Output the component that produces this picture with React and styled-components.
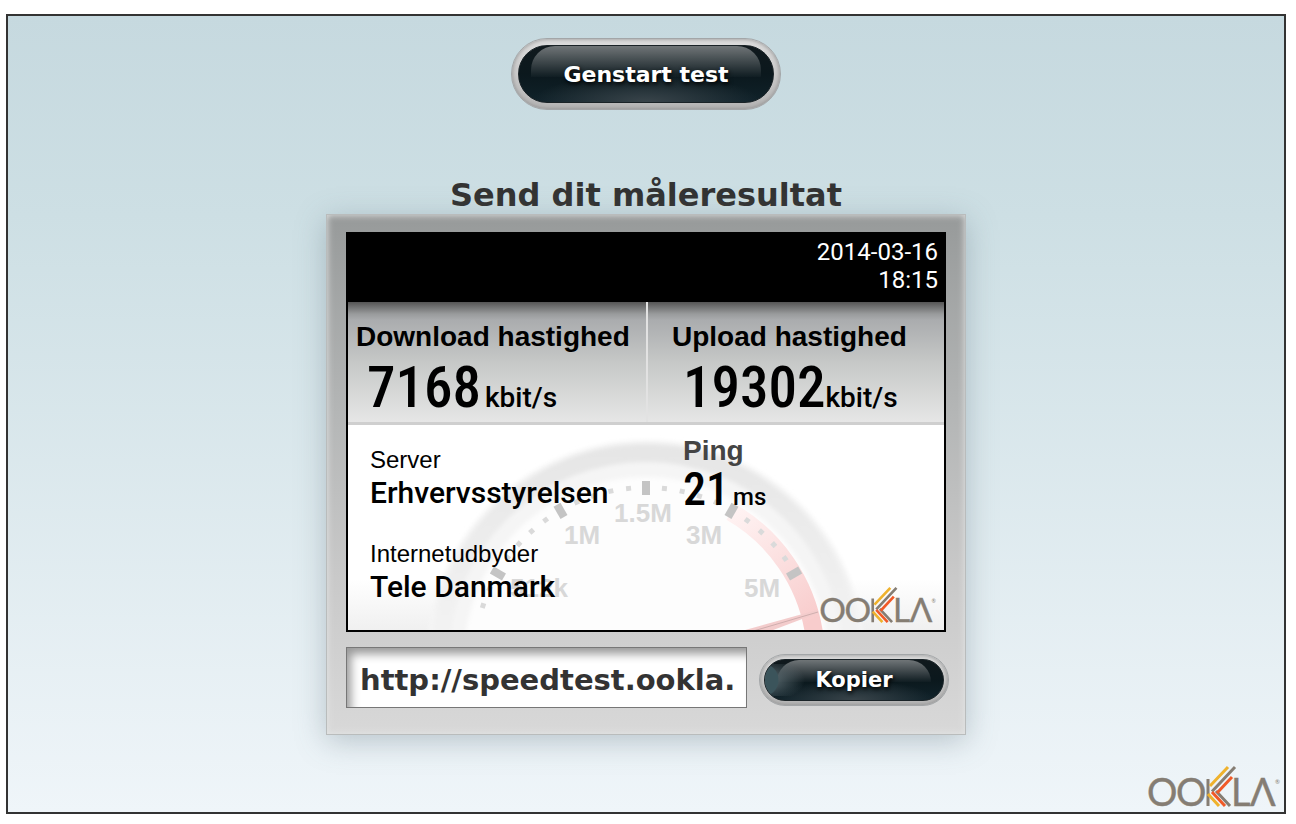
import React from "react";
import styled, { createGlobalStyle } from "styled-components";

const GlobalStyle = createGlobalStyle`
  * {
    box-sizing: border-box;
  }

  body {
    margin: 0;
    background: #fff;
    color: #333;
    font-family: "DejaVu Sans", Verdana, sans-serif;
  }
`;

const Page = styled.div`
  min-height: 100vh;
  padding: 14px 10px 10px 6px;
  display: flex;
`;

const Frame = styled.main`
  flex: 1;
  display: flex;
  flex-direction: column;
  align-items: center;
  padding: 22px 4px 4px;
  border: 2px solid #333;
  background: linear-gradient(#c6d9df, #cddfe4 25%, #eff5f9);
`;

const GlossButton = styled.button`
  flex: none;
  width: ${(p) => (p.$small ? "190px" : "270px")};
  height: ${(p) => (p.$small ? "52px" : "72px")};
  margin-top: ${(p) => (p.$small ? "4px" : "0")};
  padding: ${(p) => (p.$small ? "4px" : "6px")};
  border: 1px solid #a3a6a8;
  border-radius: 36px;
  background: linear-gradient(#dedede, #b5b5b5);
  box-shadow: inset 0 0 4px #8b8b8b;
  color: #fff;
  font-family: inherit;
  font-size: ${(p) => (p.$small ? "21px" : "22px")};
  font-weight: bold;
  cursor: pointer;
`;

const ButtonFace = styled.span`
  position: relative;
  display: flex;
  align-items: center;
  justify-content: center;
  height: 100%;
  overflow: hidden;
  border: 1px solid #1a2327;
  border-radius: 30px;
  text-shadow: 1px 2px 4px #000;
  background: radial-gradient(ellipse 45% 50% at 50% 100%, #39444a, transparent),
    linear-gradient(#10191d, #0b181d 50%, #10222a);

  &::before {
    content: "";
    position: absolute;
    top: 0;
    left: 12px;
    right: 12px;
    height: 55%;
    border-radius: 24px 24px 0 0;
    background: linear-gradient(rgba(255, 255, 255, 0.4), rgba(255, 255, 255, 0.02));
  }
`;

const Bubble = styled.span`
  position: absolute;
  top: 4px;
  bottom: 4px;
  left: 0;
  width: 44px;
  background: radial-gradient(ellipse 14px 16px at 0 50%, #3b545b 92%, transparent),
    radial-gradient(ellipse 40px 22px at 0 50%, #627278, transparent);
`;

const ButtonText = styled.span`
  position: relative;
`;

const Title = styled.h1`
  margin: 66px 0 0;
  font-size: 32px;
  line-height: 38px;
  font-weight: bold;
`;

const Card = styled.section`
  width: 640px;
  max-width: 100%;
  padding: 17px 19px 26px;
  border: 1px solid #b9bcbc;
  background: linear-gradient(#979a9a, #b4b6b6 38%, #c9c9c9 70%, #d8d8d8);
  box-shadow: 0 6px 28px rgba(90, 110, 120, 0.35), inset 0 0 7px #e4e6e6;
`;

const Result = styled.div`
  border: 2px solid #000;
  background: #fff;
  color: #000;
`;

const Timestamp = styled.div`
  height: 68px;
  padding: 4px 6px;
  background: #000;
  color: #fff;
  font: 24px/28px Roboto, sans-serif;
  text-align: right;
`;

const Speeds = styled.div`
  display: grid;
  grid-template-columns: 1fr 1fr;
  height: 123px;
  border-bottom: 3px solid #cfcfcf;
  background: linear-gradient(#555 0, #999b9c 12px, #aaacae 18px, #c6c8c7 60px, #e6e6e6);
`;

const Speed = styled.div`
  height: 120px;
  padding: 19px 0 0 ${(p) => (p.$divided ? "24px" : "8px")};
  border-left: ${(p) => (p.$divided ? "2px solid #e2e2e2" : "none")};
`;

const Label = styled.div`
  color: ${(p) => p.$color || "#000"};
  font: bold 28px/32px "Liberation Sans", Arial, sans-serif;
`;

const Reading = styled.div`
  display: flex;
  align-items: baseline;
  gap: ${(p) => p.$gap || "4px"};
  padding-left: ${(p) => p.$indent || "0"};
  font-family: "Roboto Condensed", "Liberation Sans Narrow", sans-serif;
  font-weight: 500;
  font-size: ${(p) => (p.$small ? "46px" : "57px")};
  line-height: ${(p) => (p.$small ? "44px" : "70px")};
`;

const Unit = styled.span`
  font-family: Roboto, sans-serif;
  font-size: ${(p) => (p.$small ? "24px" : "28px")};
  font-weight: 500;
`;

const Details = styled.div`
  display: grid;
  height: 205px;
  background: linear-gradient(#fff 75%, #f0f0f0);

  > * {
    grid-area: 1 / 1;
  }
`;

const Gauge = styled.svg`
  width: 100%;
  height: 100%;
  font: bold 26px "Liberation Sans", Arial, sans-serif;
`;

const Facts = styled.div`
  display: grid;
  grid-template-columns: 313px 1fr;
  padding: 10px 0 0 22px;
`;

const Fact = styled.div`
  padding-top: ${(p) => p.$top};
`;

const FactName = styled.div`
  font: 24px/30px "Liberation Sans", Arial, sans-serif;
`;

const FactValue = styled.div`
  font: 500 30px/36px Roboto, sans-serif;
`;

const Logo = styled.svg`
  display: block;
  width: ${(p) => p.$width};
  overflow: visible;
  font-family: Lato, sans-serif;
`;

const CornerLogo = styled.div`
  align-self: end;
  justify-self: end;
  padding: 0 8px 6px 0;
`;

const PageLogo = styled.div`
  margin-top: auto;
  align-self: flex-end;
`;

const ShareRow = styled.div`
  display: flex;
  align-items: center;
  gap: 12px;
  margin: 15px -3px 0 0;
`;

const ShareInput = styled.input`
  flex: 1;
  min-width: 0;
  height: 61px;
  padding: 4px 13px 0;
  border: 1px solid #777;
  border-radius: 0;
  background: #fff;
  box-shadow: inset 6px 8px 10px -2px #999;
  color: #333;
  font: bold 29px "DejaVu Sans", Verdana, sans-serif;
`;

const Ookla = ({ width }) => (
  <Logo $width={width} viewBox="0 0 132 42" role="img" aria-label="Ookla">
    <g fill="#857d73" stroke="#857d73" strokeWidth="0.4" fontSize="38">
      <text x="-1 28" y="40">OO</text>
      <text x="83" y="40">L</text>
      <text x="102" y="40">Λ</text>
      <text x="127" y="18" fontSize="6" stroke="none">®</text>
    </g>
    <g fill="none" strokeWidth="3">
      <path stroke="#857d73" d="M60 13V40M64 25.500L87 1M68 25L82 40" />
      <path stroke="#efb22d" d="M62 20L80 1M60 28L71 40" />
      <path stroke="#f05a28" d="M69 27L84 11M64 26L77 40" />
    </g>
  </Logo>
);

const MARKS = [-72, -66, -60, -54, -48, -42, -36, -30, -24, -18, -12, -6, 0, 6, 12, 18, 24, 30, 36, 42, 48, 54, 60];

const SpeedGauge = () => (
  <Gauge viewBox="0 0 596 206" preserveAspectRatio="xMidYMax slice" aria-hidden="true">
    <defs>
      <linearGradient id="fade" x1="0" y1="0" x2="0" y2="1">
        <stop offset="0" stopColor="#e6e6e6" />
        <stop offset="0.4" stopColor="#f2f2f2" />
      </linearGradient>
      <linearGradient id="red" gradientUnits="userSpaceOnUse" x1="380" y1="90" x2="460" y2="200">
        <stop offset="0" stopColor="#fff3f3" />
        <stop offset="1" stopColor="#f8cccc" />
      </linearGradient>
      <filter id="soft">
        <feGaussianBlur stdDeviation="2" />
      </filter>
    </defs>
    <circle cx="298" cy="235" r="219" fill="#f5f5f5" filter="url(#soft)" />
    <circle cx="298" cy="235" r="206" fill="none" stroke="url(#fade)" strokeWidth="18" filter="url(#soft)" />
    <circle cx="298" cy="235" r="182" fill="#fdfdfd" filter="url(#soft)" />
    <path d="M383 88A170 170 0 0 1 466 209" fill="none" stroke="url(#red)" strokeWidth="18" />
    {MARKS.map((angle) =>
      angle % 30 === 0 ? (
        <rect key={angle} x="294" y="57" width="8" height="14" fill="#c4c4c4" transform={`rotate(${angle} 298 235)`} />
      ) : (
        <rect key={angle} x="296" y="61" width="5" height="5" fill="#dadada" transform={`rotate(${angle} 298 235)`} />
      )
    )}
    <g fill="#d8d8d8">
      <text x="266" y="98">1.5M</text>
      <text x="216" y="120">1M</text>
      <text x="338" y="120">3M</text>
      <text x="396" y="173">5M</text>
      <text x="162" y="173">512k</text>
    </g>
    <path d="M390 208L469 186L470 189L420 208Z" fill="#f3cccc" />
    <path d="M402 208L470 188" stroke="#cfaeae" strokeWidth="1" />
  </Gauge>
);

const App = () => {
  return (
    <Page>
      <GlobalStyle />
      <Frame>
        <GlossButton type="button">
          <ButtonFace>
            <ButtonText>Genstart test</ButtonText>
          </ButtonFace>
        </GlossButton>
        <Title>Send dit måleresultat</Title>
        <Card>
          <Result>
            <Timestamp>
              <div>2014-03-16</div>
              <div>18:15</div>
            </Timestamp>
            <Speeds>
              <Speed>
                <Label>Download hastighed</Label>
                <Reading $indent="11px">
                  7168<Unit>kbit/s</Unit>
                </Reading>
              </Speed>
              <Speed $divided>
                <Label>Upload hastighed</Label>
                <Reading $indent="11px" $gap="0">
                  19302<Unit>kbit/s</Unit>
                </Reading>
              </Speed>
            </Speeds>
            <Details>
              <SpeedGauge />
              <Facts>
                <div>
                  <Fact $top="10px">
                    <FactName>Server</FactName>
                    <FactValue>Erhvervsstyrelsen</FactValue>
                  </Fact>
                  <Fact $top="28px">
                    <FactName>Internetudbyder</FactName>
                    <FactValue>Tele Danmark</FactValue>
                  </Fact>
                </div>
                <Fact $top="0">
                  <Label $color="#444">Ping</Label>
                  <Reading $small>
                    21<Unit $small>ms</Unit>
                  </Reading>
                </Fact>
              </Facts>
              <CornerLogo>
                <Ookla width="116px" />
              </CornerLogo>
            </Details>
          </Result>
          <ShareRow>
            <ShareInput aria-label="Link" type="text" defaultValue="http://speedtest.ookla.com" />
            <GlossButton type="button" $small>
              <ButtonFace>
                <Bubble />
                <ButtonText>Kopier</ButtonText>
              </ButtonFace>
            </GlossButton>
          </ShareRow>
        </Card>
        <PageLogo>
          <Ookla width="132px" />
        </PageLogo>
      </Frame>
    </Page>
  );
};

export default App;
